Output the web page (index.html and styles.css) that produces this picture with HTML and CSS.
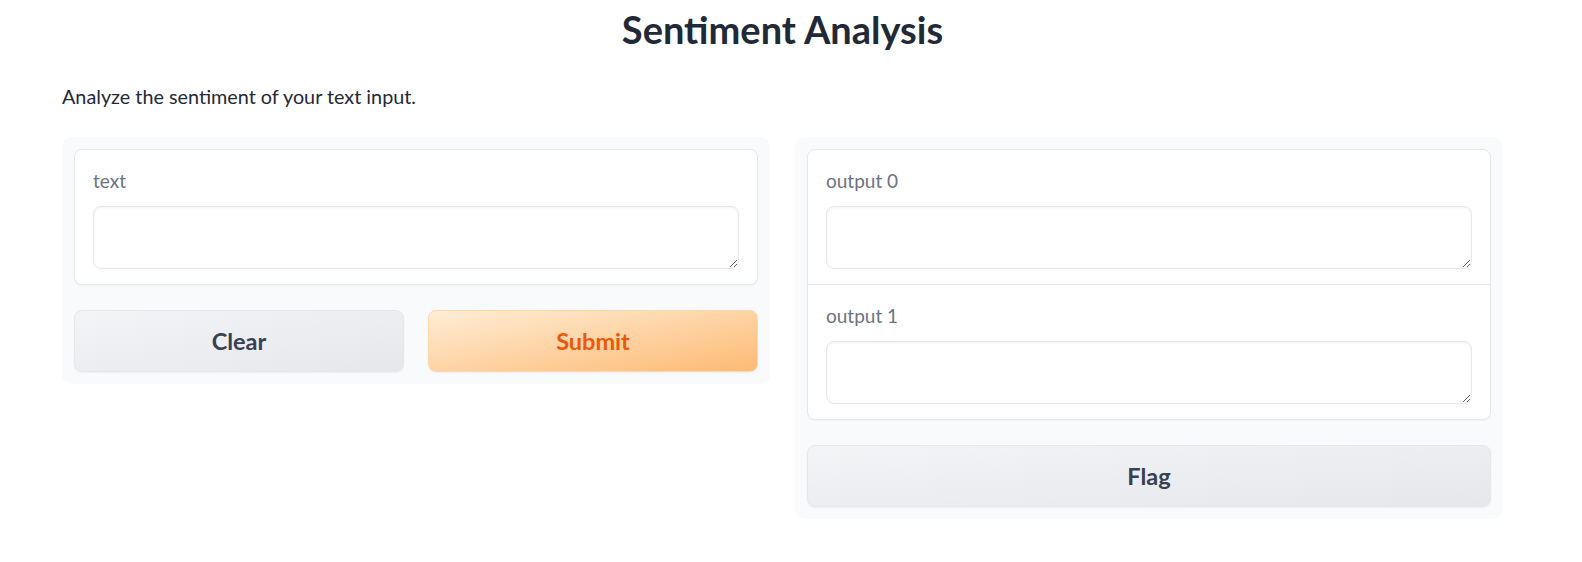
FILE: index.html
```html
<!DOCTYPE html>
<html>
<head>
<meta charset="utf-8">
<link rel="stylesheet" href="styles.css">
</head>
<body>
<div class="app">
  <h1 class="title">Sentiment Analysis</h1>
  <p class="desc">Analyze the sentiment of your text input.</p>
  <div class="row">
    <div class="panel">
      <div class="block">
        <div class="field">
          <label class="label">text</label>
          <textarea class="ta"></textarea>
        </div>
      </div>
      <div class="btns">
        <button class="btn secondary">Clear</button>
        <button class="btn primary">Submit</button>
      </div>
    </div>
    <div class="panel">
      <div class="block">
        <div class="field">
          <label class="label">output 0</label>
          <textarea class="ta"></textarea>
        </div>
        <div class="field divided">
          <label class="label">output 1</label>
          <textarea class="ta"></textarea>
        </div>
      </div>
      <div class="btns">
        <button class="btn secondary">Flag</button>
      </div>
    </div>
  </div>
</div>
</body>
</html>
```
FILE: styles.css
```css
* { box-sizing: border-box; }
body {
  margin: 0;
  background: #ffffff;
  font-family: "Lato", "Noto Sans", sans-serif;
  color: #1f2937;
}
.app {
  width: 1441px;
  margin: 0 0 0 62px;
}
.title {
  margin: 0;
  height: 60px;
  padding-top: 6px;
  text-align: center;
  font-size: 38px;
  font-weight: 700;
  line-height: 46px;
  color: #1f2937;
}
.desc {
  margin: 0;
  padding-top: 23px;
  height: 77px;
  font-size: 19.8px;
  line-height: 26px;
}
.row {
  display: flex;
  gap: 25px;
  align-items: flex-start;
}
.panel {
  flex: 1;
  background: #f9fafb;
  border-radius: 10px;
  padding: 12px;
  display: flex;
  flex-direction: column;
  gap: 25px;
}
.block {
  background: #fff;
  border: 1px solid #e5e7eb;
  border-radius: 8px;
  box-shadow: 0 1px 2px rgba(0,0,0,0.04);
}
.field {
  padding: 16px 18px 15px;
  display: flex;
  flex-direction: column;
  gap: 10px;
}
.field.divided {
  border-top: 1px solid #e5e7eb;
}
.label {
  font-size: 19px;
  line-height: 30px;
  color: #6b7280;
}
.ta {
  display: block;
  width: 100%;
  height: 63px;
  border: 1px solid #e5e7eb;
  border-radius: 8px;
  box-shadow: inset 0 1px 3px rgba(0,0,0,0.05);
  background: #fff;
  font: inherit;
  padding: 8px 12px;
  outline: none;
}
.btns {
  display: flex;
  gap: 24px;
}
.btn {
  flex: 1;
  height: 62px;
  border-radius: 8px;
  font-family: inherit;
  font-size: 23.5px;
  font-weight: 700;
  cursor: pointer;
}
.secondary {
  border: 1px solid #e5e7eb;
  background: linear-gradient(to bottom right, #f3f4f6, #e5e7eb);
  color: #374151;
  box-shadow: 0 1px 2px rgba(0,0,0,0.05);
}
.primary {
  border: 1px solid #fed7aa;
  background: linear-gradient(to bottom right, #ffedd5, #fdba74);
  color: #ea580c;
  box-shadow: 0 1px 2px rgba(0,0,0,0.05);
}
```
